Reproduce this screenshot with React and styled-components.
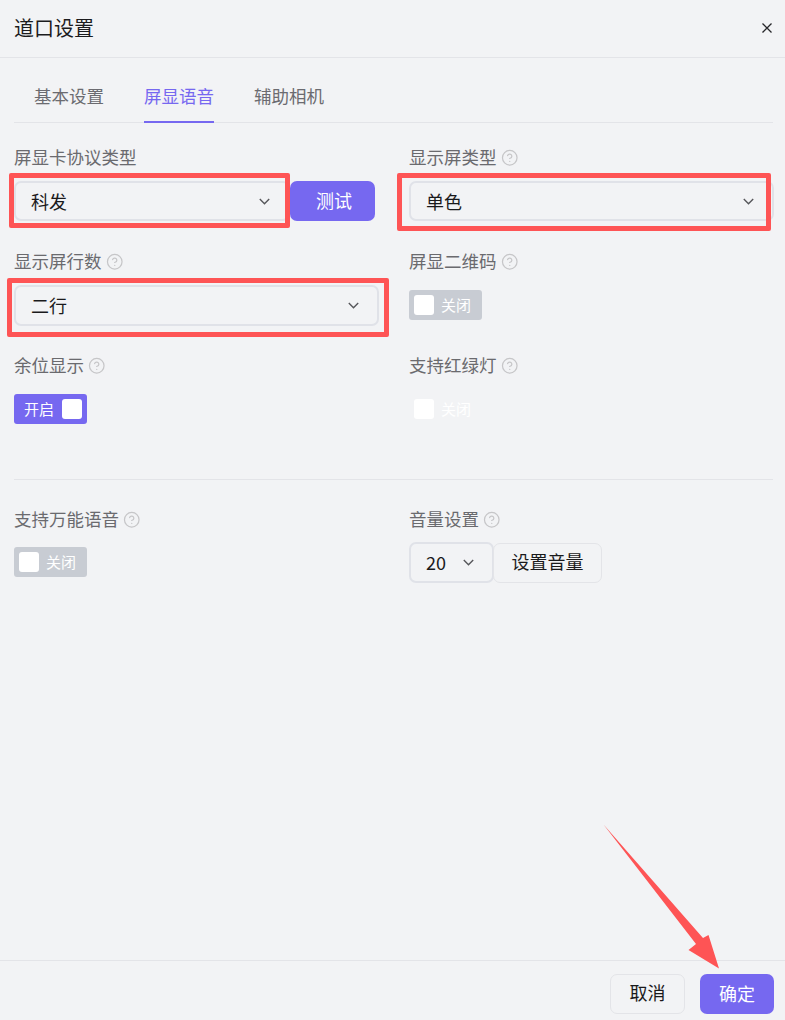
import React from 'react';
import styled, { createGlobalStyle } from 'styled-components';
import { CircleHelp } from 'lucide-react';

const Global = createGlobalStyle`
  html, body { margin: 0; padding: 0; background: #f2f3f5; }
  * { box-sizing: border-box; }
  body { font-family: "Noto Sans CJK SC", "Noto Sans", sans-serif; }
`;

const Dialog = styled.div`
  position: relative;
  width: 785px;
  height: 1020px;
  display: flex;
  flex-direction: column;
  background: #f2f3f5;
  overflow: hidden;
`;
const Header = styled.header`
  height: 58px;
  flex: none;
  display: flex;
  align-items: center;
  justify-content: space-between;
  padding: 0 13px 2px 14px;
  border-bottom: 1px solid #e3e4e8;
`;
const Title = styled.h1`
  margin: 0;
  font-size: 20px;
  line-height: 28px;
  font-weight: 400;
  color: #1c1c1e;
`;
const Close = styled.button`
  width: 10px;
  height: 10px;
  padding: 0;
  border: 0;
  background: none;
  display: flex;
  color: #26262a;
  svg { display: block; }
`;
const Body = styled.main`
  flex: 1;
  padding: 0 12px 0 14px;
`;
const Tabs = styled.nav`
  height: 65px;
  display: flex;
  gap: 40px;
  padding-left: 20px;
  align-items: flex-end;
  border-bottom: 1px solid #e3e4e8;
`;
const Tab = styled.div`
  height: 47px;
  margin-bottom: -1px;
  padding-top: 6px;
  font-size: 17.5px;
  line-height: 28px;
  color: ${p => (p.$active ? '#7668f0' : '#6b6b70')};
  border-bottom: 2px solid ${p => (p.$active ? '#7668f0' : 'transparent')};
`;
const Grid = styled.section`
  display: grid;
  grid-template-columns: 365px 365px;
  column-gap: 30px;
  row-gap: 25px;
  padding-top: ${p => p.$top}px;
`;
const Field = styled.div`
  position: relative;
  min-width: 0;
`;
const Label = styled.label`
  height: 30px;
  margin-bottom: ${p => p.$gap || 9}px;
  padding-bottom: 2px;
  display: flex;
  align-items: center;
  gap: 4px;
  font-size: 17.5px;
  color: #6a6a6e;
  svg { color: #c6c6c8; flex: none; margin-top: 3px; }
`;
const Control = styled.div`
  height: ${p => p.$height || 40}px;
  display: flex;
  align-items: center;
`;
const Select = styled.div`
  width: ${p => p.$width};
  height: ${p => p.$height || 40}px;
  flex: none;
  display: flex;
  align-items: center;
  justify-content: space-between;
  padding: 0 18px 0 15px;
  border: 2px solid #e0e2e8;
  border-radius: 7px;
  font-size: 18px;
  color: #1a1a1c;
  background: #f2f3f5;
  svg { display: block; color: #55565a; }
`;
const SelectText = styled.span`
  margin-bottom: 1px;
`;
const Primary = styled.button`
  height: 40px;
  width: ${p => p.$width}px;
  flex: none;
  padding: 0 0 2px ${p => p.$nudge || 0}px;
  border: 0;
  border-radius: 7px;
  background: #7668f0;
  color: #fff;
  font: inherit;
  font-size: 18px;
`;
const Ghost = styled.button`
  height: 40px;
  width: ${p => p.$width}px;
  flex: none;
  padding: 0 0 4px;
  border: 1.5px solid #e3e4e8;
  border-radius: 7px;
  background: #f2f3f5;
  color: #1a1a1c;
  font: inherit;
  font-size: 18px;
  margin-left: ${p => p.$shift || 0}px;
`;
const Switch = styled.div`
  width: 73px;
  height: 30px;
  border-radius: 3px;
  display: flex;
  align-items: center;
  justify-content: ${p => (p.$on ? 'flex-end' : 'flex-start')};
  gap: ${p => (p.$on ? 8 : 7)}px;
  padding: 0 5px;
  font-size: 15px;
  line-height: 20px;
  color: #fff;
  background: ${p => (p.$on ? '#7668f0' : p.$ghost ? 'transparent' : '#c8ccd3')};
`;
const Knob = styled.span`
  width: 20px;
  height: 20px;
  border-radius: 3px;
  background: #fff;
  flex: none;
`;
const Divider = styled.hr`
  margin: 50px 0 0;
  border: 0;
  height: 1px;
  background: #e3e4e8;
`;
const Footer = styled.footer`
  height: 60px;
  flex: none;
  display: flex;
  justify-content: flex-end;
  gap: 15px;
  padding: 13px 11px 0 0;
  border-top: 1px solid #e3e4e8;
`;
const Highlight = styled.div`
  position: absolute;
  left: ${p => p.$x}px;
  top: ${p => p.$y}px;
  width: ${p => p.$w}px;
  height: ${p => p.$h}px;
  border: 5px solid #fe5455;
  border-radius: 2px;
  pointer-events: none;
`;
const Arrow = styled.svg`
  position: absolute;
  left: 0;
  top: 0;
  pointer-events: none;
`;

const Chevron = () => (
  <svg width="11" height="7" viewBox="0 0 11 7" fill="none" stroke="currentColor" strokeWidth="1.4">
    <path d="M0.8 1 L5.5 5.7 L10.2 1" />
  </svg>
);
const Help = () => <CircleHelp size={17.5} strokeWidth={1.7} />;

export default function App() {
  return (
    <Dialog>
      <Global />
      <Header>
        <Title>道口设置</Title>
        <Close aria-label="关闭">
          <svg width="10" height="10" viewBox="0 0 10 10" stroke="currentColor" strokeWidth="1.3" fill="none">
            <path d="M0.5 0.5 L9.5 9.5 M9.5 0.5 L0.5 9.5" />
          </svg>
        </Close>
      </Header>
      <Body>
        <Tabs>
          <Tab>基本设置</Tab>
          <Tab $active>屏显语音</Tab>
          <Tab>辅助相机</Tab>
        </Tabs>
        <Grid $top={19}>
          <Field>
            <Label>屏显卡协议类型</Label>
            <Control>
              <Select $width="276px"><SelectText>科发</SelectText><Chevron /></Select>
              <Primary $width={85} $nudge={3}>测试</Primary>
            </Control>
          </Field>
          <Field>
            <Label>显示屏类型 <Help /></Label>
            <Control>
              <Select $width="100%"><SelectText>单色</SelectText><Chevron /></Select>
            </Control>
          </Field>
          <Field>
            <Label>显示屏行数 <Help /></Label>
            <Control>
              <Select $width="100%" $height={41}><SelectText>二行</SelectText><Chevron /></Select>
            </Control>
          </Field>
          <Field>
            <Label>屏显二维码 <Help /></Label>
            <Control>
              <Switch><Knob />关闭</Switch>
            </Control>
          </Field>
          <Field>
            <Label>余位显示 <Help /></Label>
            <Control>
              <Switch $on>开启<Knob /></Switch>
            </Control>
          </Field>
          <Field>
            <Label>支持红绿灯 <Help /></Label>
            <Control>
              <Switch $ghost><Knob />关闭</Switch>
            </Control>
          </Field>
        </Grid>
        <Divider />
        <Grid $top={24}>
          <Field>
            <Label $gap={8}>支持万能语音 <Help /></Label>
            <Control>
              <Switch><Knob />关闭</Switch>
            </Control>
          </Field>
          <Field>
            <Label $gap={8}>音量设置 <Help /></Label>
            <Control $height={41}>
              <Select $width="85px" $height={41}><SelectText>20</SelectText><Chevron /></Select>
              <Ghost $width={109} $shift={-1}>设置音量</Ghost>
            </Control>
          </Field>
        </Grid>
      </Body>
      <Footer>
        <Ghost $width={75}>取消</Ghost>
        <Primary $width={74}>确定</Primary>
      </Footer>
      <Highlight $x={9} $y={173} $w={281} $h={55} />
      <Highlight $x={397} $y={173} $w={374} $h={58} />
      <Highlight $x={7} $y={278} $w={382} $h={59} />
      <Arrow width="785" height="1020" viewBox="0 0 785 1020">
        <polygon points="603.5,824.5 703,938 708.5,935 719,968.5 688.5,950 696,944" fill="#fe5455" />
      </Arrow>
    </Dialog>
  );
}
